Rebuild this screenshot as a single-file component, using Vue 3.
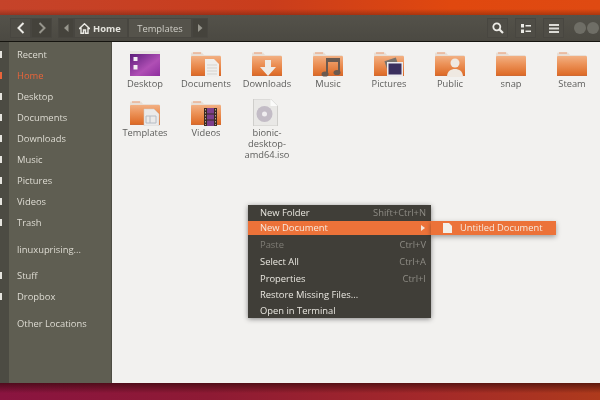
<script setup>
const places = [
  { name: 'Recent' },
  { name: 'Home', active: true },
  { name: 'Desktop' },
  { name: 'Documents' },
  { name: 'Downloads' },
  { name: 'Music' },
  { name: 'Pictures' },
  { name: 'Videos' },
  { name: 'Trash', groupEnd: true },
  { name: 'linuxuprising...', groupEnd: true },
  { name: 'Stuff' },
  { name: 'Dropbox', groupEnd: true },
  { name: 'Other Locations' }
]
const files = [
  { name: 'Desktop', kind: 'desktop' },
  { name: 'Documents', kind: 'documents' },
  { name: 'Downloads', kind: 'downloads' },
  { name: 'Music', kind: 'music' },
  { name: 'Pictures', kind: 'pictures' },
  { name: 'Public', kind: 'public' },
  { name: 'snap', kind: 'plain' },
  { name: 'Steam', kind: 'plain' },
  { name: 'Templates', kind: 'templates' },
  { name: 'Videos', kind: 'videos' },
  { name: 'bionic-desktop-amd64.iso', kind: 'iso' }
]
const menu = [
  { label: 'New Folder', keys: 'Shift+Ctrl+N' },
  { label: 'New Document', arrow: true, active: true },
  { label: 'Paste', keys: 'Ctrl+V', off: true },
  { label: 'Select All', keys: 'Ctrl+A' },
  { label: 'Properties', keys: 'Ctrl+I' },
  { label: 'Restore Missing Files...' },
  { label: 'Open in Terminal' }
]
</script>

<template>
  <div class="screen">
    <div class="wall-top"></div>
    <div class="window">
      <header class="toolbar">
        <div class="group nav">
          <button class="tool wide"><svg width="8" height="12" viewBox="0 0 8 12"><path d="M6.500 1 1.500 6l5 5" fill="none" stroke="#ecebe6" stroke-width="2"/></svg></button>
          <button class="tool wide"><svg width="8" height="12" viewBox="0 0 8 12"><path d="M1.500 1l5 5-5 5" fill="none" stroke="#96958c" stroke-width="2"/></svg></button>
        </div>
        <div class="group path">
          <button class="tool end"><svg width="5" height="8" viewBox="0 0 5 8"><path d="M4.500 0v8L0 4z" fill="#96958c"/></svg></button>
          <button class="crumb home">
            <svg width="11" height="11" viewBox="0 0 11 11"><path d="M5.500.8 0.500 5.500h1.500v4.700h2.500V7h2v3.200h2.500V5.500h1.500z" fill="none" stroke="#ecebe6" stroke-width="1.400"/></svg>
            <span>Home</span>
          </button>
          <button class="crumb current">Templates</button>
          <button class="tool end"><svg width="5" height="8" viewBox="0 0 5 8"><path d="M0 0v8l4.500-4z" fill="#96958c"/></svg></button>
        </div>
        <div class="spacer"></div>
        <button class="tool square"><svg width="12" height="12" viewBox="0 0 12 12"><circle cx="4.800" cy="4.800" r="3.500" fill="none" stroke="#ecebe6" stroke-width="1.800"/><path d="M7.500 7.500 11 11" stroke="#ecebe6" stroke-width="2.200"/></svg></button>
        <button class="tool square"><svg width="10" height="9" viewBox="0 0 10 9"><path d="M0 0h3v3.500H0zM0 5.500h3V9H0z" fill="#ecebe6"/><path d="M4.500 1h5.500v1.500H4.500zM4.500 6.500h5.500V8H4.500z" fill="#ecebe6"/></svg></button>
        <button class="tool square"><svg width="10" height="9" viewBox="0 0 10 9"><path d="M0 0h10v2H0zM0 3.500h10v2H0zM0 7h10v2H0z" fill="#dcdbd6"/></svg></button>
        <div class="controls"><i class="dot"></i><i class="dot"></i></div>
      </header>

      <div class="body">
        <nav class="launcher">
          <i v-for="p in places" :key="p.name" class="stub" :class="{ orange: p.active, gone: p.name === 'linuxuprising...' || p.name === 'Other Locations', end: p.groupEnd }"></i>
        </nav>
        <aside class="sidebar">
          <div v-for="p in places" :key="p.name" class="place" :class="{ active: p.active, end: p.groupEnd }">{{ p.name }}</div>
        </aside>
        <main class="content">
          <div class="grid">
            <div v-for="f in files" :key="f.name" class="file">
              <svg class="icon" width="32" height="27" viewBox="0 0 32 27">
                <defs>
                  <linearGradient id="fold" x1="0" y1="0" x2="0" y2="1">
                    <stop offset="0" stop-color="#f2b083"/><stop offset=".4" stop-color="#ec9258"/><stop offset="1" stop-color="#dc6722"/>
                  </linearGradient>
                  <linearGradient id="purple" x1="0" y1="0" x2="1" y2="1">
                    <stop offset="0" stop-color="#5b1c7a"/><stop offset=".6" stop-color="#b04fb5"/><stop offset="1" stop-color="#8e2f9e"/>
                  </linearGradient>
                </defs>
                <template v-if="f.kind === 'desktop'">
                  <rect x="1" y="1" width="30" height="25" fill="#7c2f91"/>
                  <rect x="1" y="3.500" width="30" height="22.500" fill="url(#purple)"/>
                  <rect x="1" y="1" width="30" height="3" fill="#e9e6e2"/>
                  <rect x="4.500" y="7" width="4" height="4" fill="#f3eef3"/>
                  <rect x="4.500" y="15" width="4" height="4.500" fill="#f3eef3"/>
                </template>
                <template v-else-if="f.kind === 'iso'">
                  <path d="M2.500 0h17l7 7v20h-24z" fill="#e9e8e6" stroke="#cfcecb"/>
                  <path d="M19.500 0v7h7z" fill="#fbfbfa"/>
                  <circle cx="13.500" cy="15" r="8" fill="#c3bcc6"/>
                  <circle cx="13.500" cy="15" r="2.500" fill="#f0eef0"/>
                </template>
                <template v-else>
                  <path d="M1 3.500a1 1 0 0 1 1-1h10l2 2.500h15.500a1 1 0 0 1 1 1v2H1z" fill="#e9dfd6"/>
                  <rect x="3" y="2.500" width="8" height="1" fill="#e99a70"/>
                  <rect x="1" y="6" width="30" height="20" rx="1" fill="url(#fold)"/>
                  <rect x="1" y="25" width="30" height="1" fill="#cf6a34"/>
                  <template v-if="f.kind === 'documents'">
                    <path d="M15 9h9l5 5v13H15z" fill="#efeeec"/><path d="M17 15h10M17 18h10M17 21h10M17 24h10" stroke="#d5d3cf"/>
                  </template>
                  <path v-if="f.kind === 'downloads'" d="M14 10h6v7h5l-8 9-8-9h5z" fill="#eeebe7"/>
                  <g v-if="f.kind === 'music'" fill="#6a5a50">
                    <path d="M14 8h14v15h-2V12H16v13h-2z"/><ellipse cx="13" cy="24" rx="3.500" ry="2.600"/><ellipse cx="25" cy="22.500" rx="3.500" ry="2.600"/>
                  </g>
                  <g v-if="f.kind === 'pictures'">
                    <rect x="13" y="9" width="12" height="13" transform="rotate(-18 19 15)" fill="#7a726c"/>
                    <rect x="14" y="12" width="16" height="15" fill="#ecebee"/><rect x="15.500" y="13.500" width="13" height="11" fill="#3b2f5e"/>
                  </g>
                  <g v-if="f.kind === 'public'" fill="#efe9e2">
                    <circle cx="21" cy="13" r="4.500"/><path d="M13 27c0-6 4-8 8-8s8 2 8 8z"/>
                  </g>
                  <g v-if="f.kind === 'templates'">
                    <path d="M15 10h10l5 5v12H15z" fill="#ebeaea" stroke="#cfcdca" stroke-width=".5"/><path d="M17 17h10v7H17z" fill="none" stroke="#b6bcc4"/><path d="M21 17v7" stroke="#b6bcc4"/>
                  </g>
                  <g v-if="f.kind === 'videos'">
                    <rect x="14" y="9" width="13" height="18" fill="#3a2a22"/><rect x="17" y="9" width="7" height="18" fill="#7d3f8c"/><path d="M17 15h7M17 21h7" stroke="#3a2a22"/>
                    <path d="M15.500 10v16M25.500 10v16" stroke="#b9a68f" stroke-dasharray="1.500 1.500"/>
                  </g>
                </template>
              </svg>
              <span class="label">{{ f.name }}</span>
            </div>
          </div>
        </main>
      </div>
    </div>
    <div class="wall-bottom"></div>

    <div class="menu">
      <div v-for="m in menu" :key="m.label" class="item" :class="{ active: m.active, off: m.off }">
        <span>{{ m.label }}</span>
        <span v-if="m.keys" class="keys">{{ m.keys }}</span>
        <svg v-if="m.arrow" width="4" height="6" viewBox="0 0 4 6"><path d="M0 0l4 3-4 3z" fill="#f4e8de"/></svg>
      </div>
    </div>
    <div class="submenu">
      <svg width="9" height="10" viewBox="0 0 9 10"><path d="M0 0h6l3 3v7H0z" fill="#f3efe9"/></svg>
      <span>Untitled Document</span>
    </div>
  </div>
</template>

<style>
body { margin: 0; background: #7c1c28; }
</style>

<style scoped>
.screen {
  position: relative;
  width: 600px;
  height: 400px;
  overflow: hidden;
  display: flex;
  flex-direction: column;
  font-family: "Open Sans", "Noto Sans", sans-serif;
  font-size: 9.5px;
  filter: blur(0.45px);
}
.wall-top {
  height: 15px;
  background: linear-gradient(180deg, transparent 60%, rgba(70, 20, 10, .35)), linear-gradient(90deg, #c5432a, #c93d1c 45%, #e0480f 75%, #df4a12);
}
.wall-bottom {
  flex: 1;
  background: linear-gradient(180deg, rgba(40, 5, 5, .6), transparent 60%), linear-gradient(90deg, #8a1440, #8e1a34 35%, #a3282a 70%, #ae3a1c);
}
.window { height: 368px; display: flex; flex-direction: column; }
.toolbar {
  height: 26px;
  display: flex;
  align-items: center;
  padding: 0 1px 0 10px;
  gap: 7px;
  background: linear-gradient(180deg, #54524a, #4b4942);
  border-bottom: 1px solid #15140f;
}
button {
  font: inherit;
  color: inherit;
  padding: 0;
  height: 20px;
  display: flex;
  align-items: center;
  justify-content: center;
  background: transparent;
  border: 1px solid #484640;
}
.group { display: flex; }
.nav { width: 42px; }
.tool.wide { width: 21px; }
.nav .tool:first-child { background: #4e4c45; }
.nav .tool:last-child { background: #44423b; }
.path { margin-left: -1px; }
.tool.end { width: 16px; background: #45433c; }
.crumb { color: #e3e2dc; font-size: 9.400px; background: #504e47; }
.home { width: 54px; gap: 3px; font-weight: 700; justify-content: flex-start; padding-left: 4px; }
.current { width: 64px; color: #cfcec7; background: #55534b; }
.spacer { flex: 1; }
.tool.square { width: 21px; background: #4f4d46; }
.controls { display: flex; gap: 1px; margin-left: 3px; }
.dot { width: 12px; height: 12px; border-radius: 50%; background: #6f6e66; }
.body { height: 341px; display: flex; }
.launcher {
  flex: none;
  width: 9px;
  box-sizing: border-box;
  padding-top: 9px;
  background: #4c4b43;
}
.stub { display: block; width: 2px; height: 7px; margin-bottom: 14px; background: #e6e5e0; }
.stub.orange { background: #e9643a; }
.stub.end { margin-bottom: 19.500px; }
.stub.gone { visibility: hidden; }
.sidebar {
  flex: none;
  width: 103px;
  box-sizing: border-box;
  padding: 2px 0 0 8px;
  background: #5f5e52;
  border-right: 1px solid #4d4c43;
  color: #dedcd3;
  font-size: 9.400px;
}
.place { height: 21px; line-height: 21px; white-space: nowrap; }
.place.active { color: #e9643a; }
.place.end { margin-bottom: 5.500px; }
.content { flex: 1; min-width: 0; background: #f2f1ef; padding: 8px 0 0 2.500px; }
.grid { display: grid; grid-template-columns: repeat(8, 61px); grid-auto-rows: 49px; }
.file { display: flex; flex-direction: column; align-items: center; color: #5d5d5b; font-size: 9.300px; line-height: 11px; text-align: center; }
.icon { flex: none; }
.label { margin-top: 1px; width: 58px; }
.menu {
  position: absolute;
  left: 248px;
  top: 205px;
  width: 183px;
  height: 113px;
  background: #403e38;
  box-shadow: 0 1px 5px rgba(0, 0, 0, .45);
  color: #e8e6df;
  font-size: 9.400px;
  font-weight: 500;
}
.item {
  height: 16.500px;
  padding: 0 5px 0 12px;
  display: flex;
  align-items: center;
  justify-content: space-between;
}
.item:first-child { height: 15.500px; }
.item.active { height: 14.500px; margin-bottom: .5px; background: #ec7239; color: #f6e9df; padding-right: 6px; }
.item.off { color: #7f7d76; height: 18px; }
.item:last-child { margin-top: -1px; }
.keys { color: #8d8b84; font-weight: 400; }
.submenu {
  position: absolute;
  left: 431px;
  top: 220.500px;
  width: 125px;
  height: 14.500px;
  box-sizing: border-box;
  padding-left: 12px;
  display: flex;
  align-items: center;
  gap: 8px;
  background: #ec7239;
  box-shadow: 0 2px 5px rgba(0, 0, 0, .35);
  color: #f6e9df;
  font-size: 9.300px;
}
</style>
